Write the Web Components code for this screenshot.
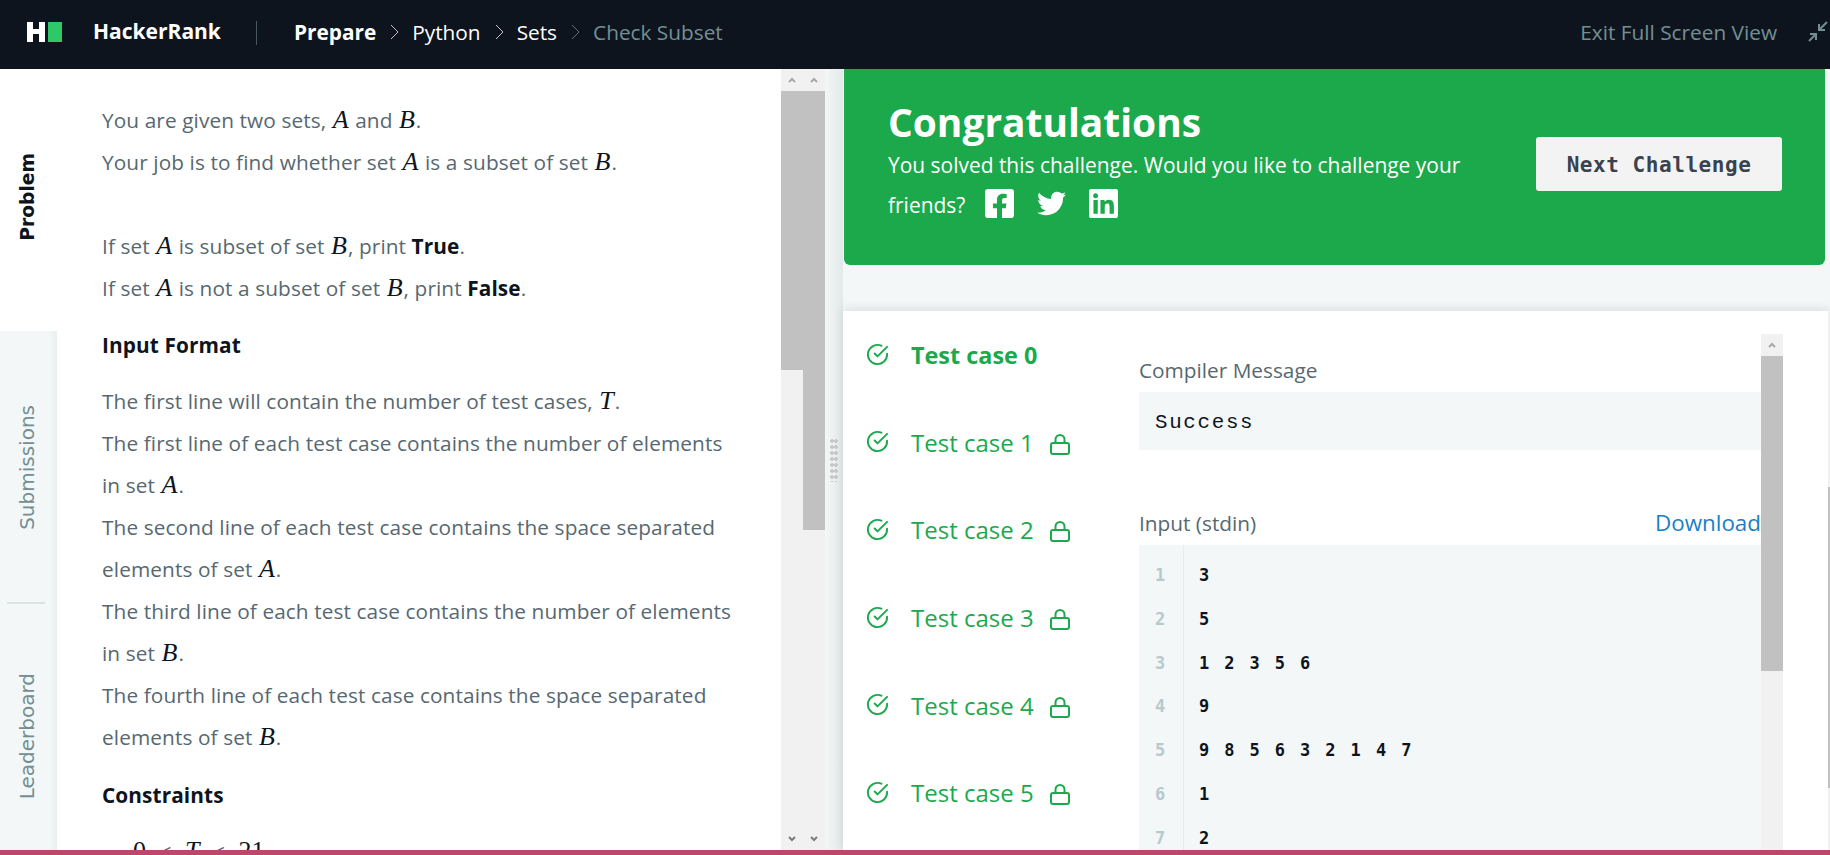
<!DOCTYPE html>
<html lang="en">
  <head>
    <meta charset="UTF-8" />
    <title>Check Subset | HackerRank</title>
    <style>
      html, body {
        margin: 0;
        height: 855px;
        overflow: hidden;
        background: #f3f7f7;
        font-family: "Open Sans", sans-serif;
      }
      body { display: flex; flex-direction: column; }
      .workspace { display: flex; height: 781px; }
      .side { flex: 1; min-width: 0; display: flex; flex-direction: column; }
    </style>
    <script>
      function define(name, html) {
        const tpl = document.createElement("template");
        tpl.innerHTML = html.trim();
        customElements.define(name, class extends HTMLElement {
          constructor() {
            super();
            this.attachShadow({ mode: "open" });
            this.shadowRoot.appendChild(tpl.content.cloneNode(true));
          }
        });
      }

      define("hr-header", `
        <style>
          :host { display: flex; align-items: center; height: 69px; flex: none; background: #0e141e; font-size: 20.8px; color: #fff; }
          svg { display: block; }
          .logo { margin: -5px 0 0 27px; }
          .brand { margin: -7px 0 0 31px; font-weight: 700; font-size: 21px; width: 127px; white-space: nowrap; }
          .bar { width: 1px; height: 24px; background: #4a5763; margin: -3px 37px 0 36px; }
          .crumbs { display: flex; align-items: center; margin-top: -5px; }
          b { font-weight: 700; }
          .sep { margin: 0 13px 0 14px; }
          .off { color: #738f93; }
          .exit { margin: -5px 0 0 auto; color: #738f93; }
          .compress { margin: -5px 1px 0 30px; }
        </style>
        <svg class="logo" width="35" height="20" viewBox="0 0 35 20" role="img" aria-label="HackerRank logo">
          <rect x="0" width="6" height="20" fill="#fff"/><rect x="12" width="6" height="20" fill="#fff"/><rect x="5" y="7" width="8" height="5" fill="#fff"/>
          <rect x="21" width="14" height="20" fill="#2ec866"/>
        </svg>
        <span class="brand">HackerRank</span>
        <span class="bar"></span>
        <div class="crumbs">
          <b>Prepare</b><hr-chevron class="sep"></hr-chevron>
          <span>Python</span><hr-chevron class="sep"></hr-chevron>
          <span>Sets</span><hr-chevron class="sep off"></hr-chevron>
          <span class="off">Check Subset</span>
        </div>
        <span class="exit">Exit Full Screen View</span>
        <svg class="compress" width="22" height="22" viewBox="0 0 22 22" fill="none" stroke="#738f93" stroke-width="2">
          <path d="M20 1 12 9M12 3v6h6M2 20l7-7M3 13h6v6"/>
        </svg>
      `);

      define("hr-chevron", `
        <style>
          :host { display: block; color: #fff; }
          svg { display: block; }
        </style>
        <svg width="9" height="16" viewBox="0 0 9 16" fill="none" stroke="currentColor" stroke-width="1" opacity=".75"><path d="M1 1l7 7-7 7"/></svg>
      `);

      define("hr-tabs", `
        <style>
          :host { display: flex; flex-direction: column; width: 57px; flex: none; }
          .first { height: 262px; background: #fff; }
          .rest { flex: 1; background: linear-gradient(90deg, #f3f7f7 85%, #e9eeee); }
        </style>
        <div class="first"><slot name="active"></slot></div>
        <div class="rest"><slot></slot></div>
      `);

      define("hr-tab", `
        <style>
          :host { display: flex; justify-content: center; padding-right: 3px; color: #738f93; font-size: 20px; }
          span { writing-mode: vertical-rl; transform: rotate(180deg); font-family: "DejaVu Sans", sans-serif; white-space: nowrap; }
          :host([active]) { color: #0e141e; font-weight: 700; font-size: 18.7px; }
        </style>
        <span><slot></slot></span>
      `);

      define("hr-tab-line", `
        <style>:host { display: block; height: 2px; margin: 72px 12px 0 7px; background: #dbe3e3; }</style>
      `);

      define("hr-problem", `
        <style>
          :host { display: block; flex: none; width: 724px; height: 781px; overflow: hidden; background: #fff; padding: 30px 40px 0 45px; box-sizing: border-box; color: #576871; font-size: 20.8px; letter-spacing: .1px; line-height: 42px; }
        </style>
        <slot></slot>
      `);

      define("hr-p", `
        <style>
          :host { display: block; }
          :host([blank]) { height: 42px; }
          :host([head]) { color: #0e141e; font-weight: 700; margin: 15px 0 14px; }
          :host([center]) { padding-left: 30px; word-spacing: 7px; }
        </style>
        <slot></slot>
      `);

      define("hr-math", `
        <style>:host { display: inline; font-family: "Liberation Serif", serif; font-style: italic; font-size: 26px; line-height: 0; letter-spacing: 0; color: #0e141e; padding: 0 1px; } :host([up]) { font-style: normal; }</style><slot></slot>
      `);

      define("hr-scroll", `
        <style>
          :host { display: flex; flex-direction: column; width: 22px; flex: none; background: #f1f1f1; }
          .btn { height: 22px; flex: none; display: flex; align-items: center; justify-content: center; }
          .thumb { background: #c1c1c1; flex: none; }
          .fill { flex: 1; }
          svg { display: block; }
          :host([open-end]) .down { display: none; }
        </style>
        <div class="btn"><svg width="8" height="6" viewBox="0 0 8 6" fill="none" stroke="#a8a8a8" stroke-width="2"><path d="M1 5l3-3 3 3"/></svg></div>
        <div class="thumb" part="thumb"></div>
        <div class="fill"></div>
        <div class="btn down"><svg width="8" height="6" viewBox="0 0 8 6" fill="none" stroke="#7d7d7d" stroke-width="2"><path d="M1 1l3 3 3-3"/></svg></div>
      `);

      define("hr-splitter", `
        <style>
          :host { display: flex; align-items: flex-start; justify-content: center; width: 18px; flex: none; background: linear-gradient(90deg, #f3f7f7, #e3e8e8); }
          .grip { margin-top: 369px; width: 8px; height: 44px; background: radial-gradient(circle, #c9c9c9 0 2px, transparent 2px) 0 0 / 4px 6px; }
        </style>
        <div class="grip"></div>
      `);

      define("hr-congrats", `
        <style>
          :host { display: flex; align-items: center; justify-content: space-between; height: 196px; flex: none; box-sizing: border-box; margin: 0 5px 46px 1px; padding: 0 43px 0 44px; background: #1ba94c; border-radius: 0 0 6px 6px; color: #fff; font-size: 20.95px; line-height: 40px; }
          .text { margin-bottom: 7px; }
          .title { font-size: 38.9px; font-weight: 700; line-height: 47.4px; margin-top: -4px; }
          .msg { width: 600px; }
          .icons { display: inline-flex; gap: 23px; vertical-align: -5px; margin-left: 14px; }
          svg { display: block; width: 29px; height: 29px; fill: #fff; }
          button { all: unset; display: block; flex: none; width: 246px; height: 54px; text-align: center; white-space: nowrap; background: #f3f3f3; border-radius: 3px; color: #39424e; font: 700 21px/56px "DejaVu Sans Mono", monospace; letter-spacing: .55px; margin-top: -7px; }
        </style>
        <div class="text">
          <div class="title"><slot name="title"></slot></div>
          <div class="msg"><slot></slot>
            <span class="icons">
              <svg viewBox="0 32 448 448"><path d="M400 32H48A48 48 0 0 0 0 80v352a48 48 0 0 0 48 48h137.25V327.69h-63V256h63v-54.64c0-62.15 37-96.48 93.67-96.48 27.14 0 55.52 4.84 55.52 4.84v61h-31.27c-30.81 0-40.42 19.12-40.42 38.73V256h68.78l-11 71.69h-57.78V480H400a48 48 0 0 0 48-48V80a48 48 0 0 0-48-48z"/></svg>
              <svg viewBox="0 0 512 512"><path d="M459.37 151.716c.325 4.548.325 9.097.325 13.645 0 138.72-105.583 298.558-298.558 298.558-59.452 0-114.68-17.219-161.137-47.106 8.447.974 16.568 1.299 25.34 1.299 49.055 0 94.213-16.568 130.274-44.832-46.132-.975-84.792-31.188-98.112-72.772 6.498.974 12.995 1.624 19.818 1.624 9.421 0 18.843-1.3 27.614-3.573-48.081-9.747-84.143-51.98-84.143-102.985v-1.299c13.969 7.797 30.214 12.67 47.431 13.319-28.264-18.843-46.781-51.005-46.781-87.391 0-19.492 5.197-37.36 14.294-52.954 51.655 63.675 129.3 105.258 216.365 109.807-1.624-7.797-2.599-15.918-2.599-24.04 0-57.828 46.782-104.934 104.934-104.934 30.213 0 57.502 12.67 76.67 33.137 23.715-4.548 46.456-13.32 66.599-25.34-7.798 24.366-24.366 44.833-46.132 57.827 21.117-2.273 41.584-8.122 60.426-16.243-14.292 20.791-32.161 39.308-52.628 54.253z"/></svg>
              <svg viewBox="0 32 448 448"><path d="M416 32H31.9C14.3 32 0 46.5 0 64.3v383.4C0 465.5 14.3 480 31.9 480H416c17.6 0 32-14.5 32-32.3V64.3c0-17.8-14.4-32.3-32-32.3zM135.4 416H69V202.2h66.5V416zm-33.2-243c-21.3 0-38.5-17.3-38.5-38.5S80.9 96 102.2 96c21.2 0 38.5 17.3 38.5 38.5 0 21.3-17.2 38.5-38.5 38.5zm282.1 243h-66.4V312c0-24.8-.5-56.7-34.5-56.7-34.6 0-39.9 27-39.9 54.9V416h-66.4V202.2h63.7v29.2h.9c8.9-16.8 30.6-34.5 62.9-34.5 67.2 0 79.7 44.3 79.7 101.9V416z"/></svg>
            </span>
          </div>
        </div>
        <button><slot name="action"></slot></button>
      `);

      define("hr-results", `
        <style>
          :host { display: flex; flex: 1; min-height: 0; background: #fff; box-shadow: 0 -2px 10px rgba(0,0,0,.1); }
          .list { width: 296px; flex: none; }
          .main { width: 622px; flex: none; padding-top: 47px; box-sizing: border-box; overflow: hidden; }
          hr-scroll { margin-top: 23px; }
          hr-scroll::part(thumb) { height: 315px; }
          .rest { flex: 1; }
          .page { width: 2px; flex: none; background: linear-gradient(#f1f1f1 176px, #c1c1c1 176px 477px, #f1f1f1 477px); }
        </style>
        <div class="list"><slot name="cases"></slot></div>
        <div class="main"><slot></slot></div>
        <hr-scroll open-end></hr-scroll>
        <div class="rest"></div>
        <div class="page"></div>
      `);

      define("hr-case", `
        <style>
          :host { display: flex; align-items: center; height: 87.6px; padding-left: 23px; color: #1ba94c; font-size: 24px; white-space: nowrap; }
          :host([active]) { font-weight: 700; font-size: 23.4px; }
          .check { display: block; flex: none; margin-right: 22px; margin-top: -1px; }
          .lock { display: block; flex: none; margin: 4px 0 0 16px; }
          :host([active]) .lock { display: none; }
        </style>
        <svg class="check" width="23" height="23" viewBox="0 0 24 24" fill="none" stroke="currentColor" stroke-width="2" stroke-linecap="round" stroke-linejoin="round">
          <path d="M22 11.08V12a10 10 0 1 1-5.93-9.14"/><path d="M22 4 12 14.01l-3-3"/>
        </svg>
        <span><slot></slot></span>
        <svg class="lock" width="20" height="21" viewBox="0 0 20 21" fill="none" stroke="currentColor" stroke-width="2">
          <rect x="1" y="9" width="18" height="11" rx="2"/><path d="M5.5 9V5.5a4.5 4.5 0 0 1 9 0V9"/>
        </svg>
      `);

      define("hr-section", `
        <style>
          :host { display: block; margin-bottom: 61px; color: #576871; font-size: 20.8px; }
          .top { display: flex; justify-content: space-between; align-items: center; height: 24px; margin-bottom: 10px; }
          .dl { color: #1a7fc6; font-size: 22.4px; margin-bottom: 2px; }
        </style>
        <div class="top"><span><slot name="label"></slot></span><span class="dl"><slot name="link"></slot></span></div>
        <slot></slot>
      `);

      define("hr-message", `
        <style>
          :host { display: block; height: 58px; padding-left: 16px; background: #f3f7f7; color: #0e141e; font: 20.8px/61px "Liberation Mono", monospace; letter-spacing: 1.7px; }
        </style>
        <slot></slot>
      `);

      define("hr-code", `
        <style>
          :host { display: block; padding-top: 8px; height: 320px; overflow: hidden; background: linear-gradient(90deg, #f3f7f7 44px, #e6ecec 44px 45px, #f3f7f7 45px); }
        </style>
        <slot></slot>
      `);

      define("hr-line", `
        <style>
          :host { display: flex; height: 43.85px; align-items: center; font: 700 17px "DejaVu Sans Mono", monospace; color: #0e141e; letter-spacing: 2.4px; white-space: pre; }
          .n { width: 60px; box-sizing: border-box; padding-left: 16px; color: #b7c9cc; flex: none; }
        </style>
        <span class="n"><slot name="n"></slot></span><span><slot></slot></span>
      `);

      define("hr-strip", `
        <style>:host { display: block; height: 5px; flex: none; background: #b9486b; }</style>
      `);
    </script>
    <style>
      hr-scroll.a::part(thumb) { height: 279px; }
      hr-scroll.b::part(thumb) { height: 439px; }
      hr-tab[active] { padding-top: 84px; }
      hr-tab.sub { padding-top: 74px; }
      hr-tab.lead { padding-top: 69px; }
      hr-p.last { margin-top: 16px; }
    </style>
  </head>
  <body>
    <hr-header></hr-header>
    <div class="workspace">
      <hr-tabs>
        <hr-tab slot="active" active>Problem</hr-tab>
        <hr-tab class="sub">Submissions</hr-tab>
        <hr-tab-line></hr-tab-line>
        <hr-tab class="lead">Leaderboard</hr-tab>
      </hr-tabs>
      <hr-problem>
        <hr-p>You are given two sets, <hr-math>A</hr-math> and <hr-math>B</hr-math>.</hr-p>
        <hr-p>Your job is to find whether set <hr-math>A</hr-math> is a subset of set <hr-math>B</hr-math>.</hr-p>
        <hr-p blank></hr-p>
        <hr-p>If set <hr-math>A</hr-math> is subset of set <hr-math>B</hr-math>, print <b style="color:#0e141e">True</b>.</hr-p>
        <hr-p>If set <hr-math>A</hr-math> is not a subset of set <hr-math>B</hr-math>, print <b style="color:#0e141e">False</b>.</hr-p>
        <hr-p head>Input Format</hr-p>
        <hr-p>The first line will contain the number of test cases, <hr-math>T</hr-math>.</hr-p>
        <hr-p>The first line of each test case contains the number of elements<br>in set <hr-math>A</hr-math>.</hr-p>
        <hr-p>The second line of each test case contains the space separated<br>elements of set <hr-math>A</hr-math>.</hr-p>
        <hr-p>The third line of each test case contains the number of elements<br>in set <hr-math>B</hr-math>.</hr-p>
        <hr-p>The fourth line of each test case contains the space separated<br>elements of set <hr-math>B</hr-math>.</hr-p>
        <hr-p head class="last">Constraints</hr-p>
        <hr-p center><hr-math up>0</hr-math> &lt; <hr-math>T</hr-math> &lt; <hr-math up>21</hr-math></hr-p>
      </hr-problem>
      <hr-scroll class="a"></hr-scroll>
      <hr-scroll class="b"></hr-scroll>
      <hr-splitter></hr-splitter>
      <div class="side">
        <hr-congrats>
          <span slot="title">Congratulations</span>
          You solved this challenge. Would you like to challenge your friends?
          <span slot="action">Next Challenge</span>
        </hr-congrats>
        <hr-results>
          <hr-case slot="cases" active>Test case 0</hr-case>
          <hr-case slot="cases">Test case 1</hr-case>
          <hr-case slot="cases">Test case 2</hr-case>
          <hr-case slot="cases">Test case 3</hr-case>
          <hr-case slot="cases">Test case 4</hr-case>
          <hr-case slot="cases">Test case 5</hr-case>
          <hr-section>
            <span slot="label">Compiler Message</span>
            <hr-message>Success</hr-message>
          </hr-section>
          <hr-section>
            <span slot="label">Input (stdin)</span>
            <span slot="link">Download</span>
            <hr-code>
              <hr-line><span slot="n">1</span>3</hr-line>
              <hr-line><span slot="n">2</span>5</hr-line>
              <hr-line><span slot="n">3</span>1 2 3 5 6</hr-line>
              <hr-line><span slot="n">4</span>9</hr-line>
              <hr-line><span slot="n">5</span>9 8 5 6 3 2 1 4 7</hr-line>
              <hr-line><span slot="n">6</span>1</hr-line>
              <hr-line><span slot="n">7</span>2</hr-line>
            </hr-code>
          </hr-section>
        </hr-results>
      </div>
    </div>
    <hr-strip></hr-strip>
  </body>
</html>
